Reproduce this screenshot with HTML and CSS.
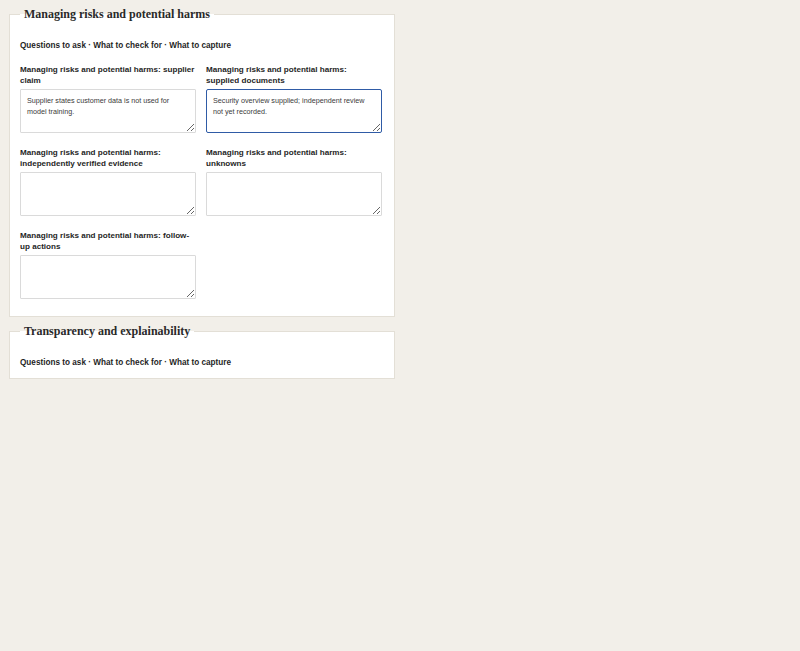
FILE: index.html
```html
<!DOCTYPE html>
<html lang="en">
<head>
<meta charset="utf-8">
<title>Assessment</title>
<link rel="stylesheet" href="styles.css">
</head>
<body>
<main class="page">
  <fieldset class="section">
    <legend class="section-title">Managing risks and potential harms</legend>
    <p class="prompts">Questions to ask · What to check for · What to capture</p>
    <div class="fields">
      <div class="field">
        <label class="field-label" for="f1">Managing risks and potential harms: supplier claim</label>
        <textarea class="field-input" id="f1">Supplier states customer data is not used for model training.</textarea>
      </div>
      <div class="field">
        <label class="field-label" for="f2">Managing risks and potential harms: supplied documents</label>
        <textarea class="field-input is-focused" id="f2">Security overview supplied; independent review not yet recorded.</textarea>
      </div>
      <div class="field">
        <label class="field-label" for="f3">Managing risks and potential harms: independently verified evidence</label>
        <textarea class="field-input" id="f3"></textarea>
      </div>
      <div class="field">
        <label class="field-label" for="f4">Managing risks and potential harms: unknowns</label>
        <textarea class="field-input" id="f4"></textarea>
      </div>
      <div class="field">
        <label class="field-label" for="f5">Managing risks and potential harms: follow-up actions</label>
        <textarea class="field-input" id="f5"></textarea>
      </div>
    </div>
  </fieldset>
  <fieldset class="section">
    <legend class="section-title">Transparency and explainability</legend>
    <p class="prompts">Questions to ask · What to check for · What to capture</p>
  </fieldset>
</main>
<script src="script.js"></script>
</body>
</html>
```
FILE: styles.css
```css
html, body {
  margin: 0;
  padding: 0;
  background: #f2efe9;
}
body {
  font-family: "Liberation Sans", Arial, sans-serif;
  color: #222;
}
.page {
  width: 386px;
  padding: 7px 0 0 9px;
}
.section {
  margin: 0 0 7px;
  padding: 0 10px 10px;
  border: 1px solid #e3dfd6;
  background: #fff;
  min-width: 0;
}
.section-title {
  padding: 0 4px;
  font-family: "Liberation Serif", "DejaVu Serif", Georgia, serif;
  font-weight: bold;
  font-size: 12px;
  line-height: 15px;
  color: #2a2a2a;
}
.prompts {
  margin: 18px 0 0;
  font-size: 8.2px;
  line-height: 11px;
  font-weight: bold;
  color: #1f1f1f;
}
.fields {
  display: grid;
  grid-template-columns: 176px 176px;
  column-gap: 10px;
  row-gap: 14px;
  margin: 13px 0 7px;
}
.field-label {
  display: block;
  font-size: 8.1px;
  line-height: 11px;
  font-weight: bold;
  color: #1f1f1f;
  margin-bottom: 3px;
}
.field-input {
  display: block;
  box-sizing: border-box;
  width: 100%;
  height: 44px;
  margin: 0;
  padding: 5px 6px;
  border: 1px solid #dadada;
  border-radius: 1px;
  font-family: "Liberation Sans", Arial, sans-serif;
  font-size: 7.2px;
  line-height: 11px;
  color: #3a3a3a;
  background: #fff;
  resize: vertical;
  outline: none;
  caret-color: #000;
}
.field-input.is-focused {
  border: 1.5px solid #2f5ba6;
  border-radius: 2px;
}
```
FILE: script.js
```js
(function () {
  var el = document.getElementById('f2');
  if (!el) return;
  el.focus();
  var end = el.value.length;
  el.setSelectionRange(end, end);
})();
```
